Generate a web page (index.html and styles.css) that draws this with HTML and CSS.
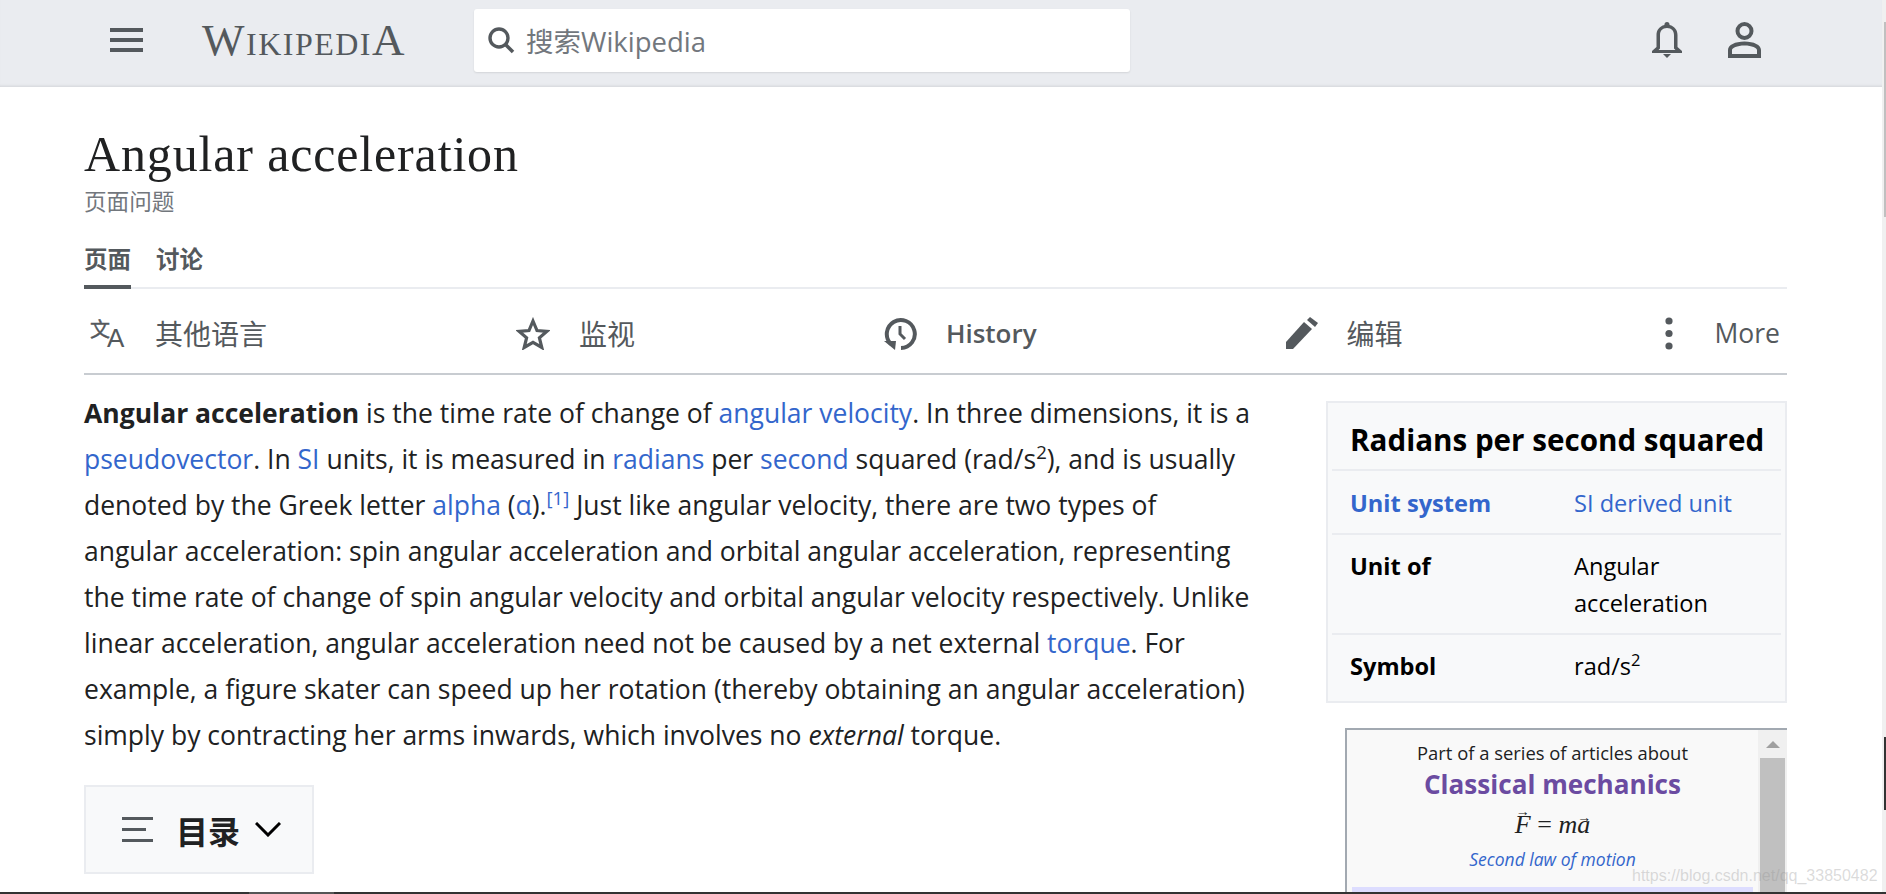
FILE: index.html
```html
<!DOCTYPE html>
<html lang="en">
<head>
  <meta charset="UTF-8" />
  <title>Angular acceleration - Wikipedia</title>
  <link rel="stylesheet" href="styles.css">
</head>
<body>

<div class="pagina">
  <div class="principal">

    <header class="cabecera">
      <svg class="menu" width="33" height="24" viewBox="0 0 33 24"><path d="M0 0h33v4H0zM0 10h33v4H0zM0 20h33v4H0z"/></svg>
      <div class="logo">Wikipedi<span class="logo-a">A</span></div>
      <div class="buscador">
        <svg width="27" height="27" viewBox="0 0 27 27"><circle cx="11" cy="11" r="9" fill="none" stroke="#54595d" stroke-width="3.4"/><path d="M17 17l8 8" stroke="#54595d" stroke-width="3.6" fill="none"/></svg>
        <span>搜索Wikipedia</span>
      </div>
      <div class="cabecera-iconos">
        <svg width="30" height="36" viewBox="0 0 30 36"><path fill-rule="evenodd" d="M15 0c1.6 0 2.6 1.2 2.6 3 5 1.2 7.9 5.2 7.9 10v12l4.500 4v2H0v-2l4.500-4V13c0-4.800 2.900-8.800 7.900-10C12.400 1.200 13.400 0 15 0zM15 6c-4.700 0-7 3.200-7 7v13.500l-1.500 1.500h17L22 26.500V13c0-3.800-2.300-7-7-7z"/><path d="M11 32h8l-4 4z"/></svg>
        <svg width="33" height="36" viewBox="0 0 33 36"><circle cx="16.500" cy="9" r="7" fill="none" stroke="#54595d" stroke-width="4"/><path fill-rule="evenodd" d="M0 36v-8c0-5 7-8.500 16.500-8.500S33 23 33 28v8zM4 32h25v-4c0-2-5-4.500-12.500-4.500S4 26 4 28z"/></svg>
      </div>
    </header>

    <div class="contenido">
      <h1>Angular acceleration</h1>
      <div class="subtitulo">页面问题</div>

      <nav class="pestanas">
        <a class="pestana activa">页面</a>
        <a class="pestana">讨论</a>
      </nav>

      <div class="acciones">
        <div class="accion">
          <svg class="icono-idioma" width="36" height="32" viewBox="0 0 36 32"><text x="0" y="20" class="icono-wen">文</text><text x="17" y="30" class="icono-a">A</text></svg>
          <span class="cjk">其他语言</span>
        </div>
        <div class="accion">
          <svg width="34" height="33" viewBox="0 0 34 33"><path fill="none" stroke="#54595d" stroke-width="3.200" d="M17 4l4 9.500 10 .8-7.600 6.500 2.400 9.700L17 25.300 8.200 30.500l2.400-9.700L3 14.300l10-.8z"/></svg>
          <span class="cjk">监视</span>
        </div>
        <div class="accion">
          <svg width="33" height="33" viewBox="0 0 33 33"><path fill="none" stroke="#54595d" stroke-width="4" d="M7 27A14 14 0 1 1 17 31"/><path d="M0 24h12l-1 9z"/><path fill="none" stroke="#54595d" stroke-width="3" d="M16 9v8l5 5"/></svg>
          <span class="historia">History</span>
        </div>
        <div class="accion">
          <svg width="32" height="32" viewBox="0 0 32 32"><path d="M0 32v-7L18 5l8 7L7 32z"/><path d="M21 3l3-3 8 6-3 4z"/></svg>
          <span class="cjk">编辑</span>
        </div>
        <div class="accion accion-mas">
          <svg width="8" height="33" viewBox="0 0 8 33"><circle cx="4" cy="4" r="3.600"/><circle cx="4" cy="16.500" r="3.600"/><circle cx="4" cy="29" r="3.600"/></svg>
          <span class="mas">More</span>
        </div>
      </div>

      <div class="cuerpo">
        <article class="articulo">
          <p><b>Angular acceleration</b> is the time rate of change of <a>angular velocity</a>. In three dimensions, it is a <a>pseudovector</a>. In <a>SI</a> units, it is measured in <a>radians</a> per <a>second</a> squared (rad/s<sup>2</sup>), and is usually denoted by the Greek letter <a>alpha</a> (<a>α</a>).<sup class="ref"><a>[1]</a></sup> Just like angular velocity, there are two types of angular acceleration: spin angular acceleration and orbital angular acceleration, representing the time rate of change of spin angular velocity and orbital angular velocity respectively. Unlike linear acceleration, angular acceleration need not be caused by a net external <a>torque</a>. For example, a figure skater can speed up her rotation (thereby obtaining an angular acceleration) simply by contracting her arms inwards, which involves no <i>external</i> torque.</p>

          <div class="indice">
            <svg width="31" height="25" viewBox="0 0 31 25"><path d="M0 0h31v3H0zM0 11h24v3H0zM0 22h31v3H0z"/></svg>
            <b>目录</b>
            <svg class="flecha" width="26" height="15" viewBox="0 0 26 15"><path d="M1 1l12 12L25 1" fill="none" stroke="#000" stroke-width="3"/></svg>
          </div>
        </article>

        <aside class="lateral">
          <div class="ficha">
            <table>
              <colgroup><col class="col-etiqueta"><col></colgroup>
              <tr class="fila-titulo"><th colspan="2">Radians per second squared</th></tr>
              <tr class="fila-a"><th><a>Unit system</a></th><td><a>SI derived unit</a></td></tr>
              <tr class="fila-b"><th>Unit of</th><td>Angular acceleration</td></tr>
              <tr class="fila-c"><th>Symbol</th><td>rad/s<sup>2</sup></td></tr>
            </table>
          </div>

          <div class="serie">
            <div class="serie-texto">
              <div class="serie-parte">Part of a series of articles about</div>
              <div class="serie-nombre">Classical mechanics</div>
              <div class="formula"><i class="vector vector-alto">F</i> = <i>m</i><i class="vector">a</i></div>
              <div class="serie-ley"><a>Second law of motion</a></div>
              <div class="serie-franja"></div>
            </div>
            <div class="serie-barra">
              <div class="serie-boton"></div>
              <div class="serie-pulgar"></div>
            </div>
          </div>
        </aside>
      </div>
    </div>
  </div>

  <div class="barra-pagina"></div>
</div>

<div class="barra-inferior"><div class="barra-trozo"></div></div>

<div class="pulgar-gris"></div>
<div class="pulgar-negro"></div>
<div class="marca-agua">https://blog.csdn.net/qq_33850482</div>

</body>
</html>
```

FILE: styles.css
```css
html, body {
  margin: 0;
  height: 894px;
  overflow: hidden;
}

body {
  font-family: 'Open Sans', 'Noto Sans CJK SC', sans-serif;
  color: #202122;
  background: #fff;
  position: relative;
}

a {
  color: #3366cc;
}

svg {
  fill: #54595d;
  display: block;
}

.pagina {
  display: flex;
  height: 892px;
  overflow: hidden;
}

.principal {
  flex: 1;
  min-width: 0;
}

.barra-pagina {
  width: 4px;
  background: #f0f0f0;
}

.barra-inferior {
  height: 2px;
  background: #333;
  padding-left: 249px;
}

.barra-trozo {
  width: 85px;
  height: 2px;
  background: #555;
}

.pulgar-gris {
  position: absolute;
  right: 0;
  top: 22px;
  width: 2px;
  height: 195px;
  background: #c0c0c0;
}

.pulgar-negro {
  position: absolute;
  right: 0;
  top: 737px;
  width: 2px;
  height: 73px;
  background: #333;
}

.marca-agua {
  position: absolute;
  left: 1632px;
  top: 864px;
  font-family: 'Liberation Sans', sans-serif;
  font-size: 16px;
  line-height: 24px;
  white-space: nowrap;
  color: rgba(150, 150, 150, 0.35);
}

/* cabecera */
.cabecera {
  height: 87px;
  box-sizing: border-box;
  background: #eaecf0;
  box-shadow: inset 0 -3px 3px -2px rgba(0, 0, 0, 0.1);
  display: flex;
  align-items: center;
  padding: 0 121px 7px 110px;
}

.logo {
  margin-left: 59px;
  width: 204px;
  font-family: 'Liberation Serif', serif;
  font-variant: small-caps;
  font-size: 45px;
  line-height: 40px;
  letter-spacing: 1.500px;
  color: #54595d;
  white-space: nowrap;
}

.logo-a {
  font-size: 45px;
}

.buscador {
  margin-left: 68px;
  width: 656px;
  height: 63px;
  box-sizing: border-box;
  background: #fff;
  border-radius: 3px;
  box-shadow: 0 1px 2px rgba(0, 0, 0, 0.1);
  display: flex;
  align-items: center;
  gap: 11px;
  padding-left: 14px;
  font-size: 27.500px;
  color: #72777d;
}

.cabecera-iconos {
  margin-left: auto;
  display: flex;
  gap: 46px;
}

/* titulo y pestañas */
.contenido {
  padding: 0 95px 0 84px;
}

h1 {
  margin: 37px 0 0;
  font-family: 'Liberation Serif', serif;
  font-weight: normal;
  font-size: 50px;
  line-height: 60px;
  letter-spacing: 0.850px;
  color: #202122;
}

.subtitulo {
  height: 32px;
  padding-top: 1px;
  font-size: 22.600px;
  line-height: 33px;
  color: #72777d;
}

.pestanas {
  height: 70px;
  border-bottom: 2px solid #eaecf0;
  display: flex;
  align-items: flex-end;
  gap: 25px;
}

.pestana {
  font-size: 23.500px;
  font-weight: bold;
  line-height: 30px;
  color: #54595d;
  padding-bottom: 11px;
  margin-bottom: -2px;
  border-bottom: 4px solid transparent;
}

.pestana.activa {
  border-bottom-color: #54595d;
}

.acciones {
  height: 80px;
  border-bottom: 2px solid #c8ccd1;
  padding: 4px 7px 0 6px;
  display: flex;
  justify-content: space-between;
  align-items: center;
}

.accion {
  display: flex;
  align-items: center;
  gap: 29px;
  font-size: 26px;
  color: #54595d;
}

.accion-mas {
  padding-left: 14px;
}

.accion .cjk {
  font-size: 28px;
}

.accion .historia {
  font-weight: 600;
}

.accion .mas {
  margin-left: 12px;
  font-size: 26.500px;
}

.icono-idioma {
  overflow: visible;
}

.icono-wen {
  font-size: 20px;
  fill: #54595d;
  stroke: #54595d;
  stroke-width: 0.4px;
}

.icono-a {
  font-family: 'Liberation Sans', sans-serif;
  font-size: 26px;
  fill: #54595d;
}

/* cuerpo */
.cuerpo {
  display: flex;
  justify-content: space-between;
}

.articulo {
  width: 1181px;
}

.articulo p {
  margin: 15px 0 0;
  max-width: 1169px;
  font-size: 26.500px;
  line-height: 46px;
}

sup {
  font-size: 70%;
  line-height: 0;
}

.indice {
  margin-top: 27px;
  width: 230px;
  height: 89px;
  box-sizing: border-box;
  background: #f8f9fa;
  border: 2px solid #eaecf0;
  display: flex;
  align-items: center;
  padding-left: 36px;
  font-size: 32px;
}

.indice b {
  margin-left: 23px;
}

.indice .flecha {
  margin-left: 15px;
}

.lateral {
  width: 461px;
  margin-top: 26px;
}

.ficha {
  height: 302px;
  box-sizing: border-box;
  background: #f8f9fa;
  border: 2px solid #eaecf0;
  padding: 0 4px;
  color: #000;
}

.ficha table {
  width: 100%;
  table-layout: fixed;
  border-collapse: collapse;
  font-size: 23.600px;
  line-height: 37px;
}

.col-etiqueta {
  width: 224px;
}

.ficha th, .ficha td {
  text-align: left;
  vertical-align: middle;
  padding: 0 0 0 18px;
}

.ficha tr + tr {
  border-top: 2px solid #eaecf0;
}

.fila-titulo {
  height: 67px;
  font-size: 29.600px;
}

.ficha .fila-titulo th {
  padding-top: 6px;
}

.fila-a {
  height: 64px;
}

.ficha .fila-a th, .ficha .fila-a td {
  padding-top: 3px;
}

.fila-b {
  height: 100px;
}

.ficha .fila-b th, .ficha .fila-b td {
  vertical-align: top;
  padding-top: 13px;
}

.fila-c {
  height: 67px;
}

.ficha .fila-c th, .ficha .fila-c td {
  padding-bottom: 4px;
}

.serie {
  margin-top: 25px;
  margin-left: 19px;
  height: 170px;
  display: flex;
  border-top: 2px solid #a2a9b1;
  border-left: 2px solid #a2a9b1;
  overflow: hidden;
}

.serie-texto {
  flex: 1;
  background: #f9f9f9;
  padding: 10px 5px 0;
  text-align: center;
}

.serie-parte {
  font-size: 18.400px;
  line-height: 26px;
}

.serie-nombre {
  font-size: 26.100px;
  font-weight: bold;
  line-height: 36px;
  color: #6b4ba1;
}

.formula {
  margin-top: 4px;
  font-family: 'Liberation Serif', serif;
  font-size: 26px;
  line-height: 38px;
}

.vector {
  position: relative;
  display: inline-block;
}

.vector::before {
  content: "→";
  position: absolute;
  left: 0;
  right: 0;
  top: 6px;
  font-style: normal;
  font-size: 14px;
  line-height: 12px;
  text-align: center;
}

.vector-alto::before {
  top: 0;
}

.serie-ley {
  margin-top: 1px;
  font-size: 17.500px;
  font-style: italic;
  line-height: 28px;
}

.serie-franja {
  margin-top: 14px;
  height: 20px;
  background: #ddddff;
}

.serie-barra {
  width: 29px;
  box-sizing: border-box;
  background: #f0f0f0;
  padding: 0 2px;
}

.serie-boton {
  height: 28px;
  display: flex;
  align-items: center;
  justify-content: center;
}

.serie-boton::before {
  content: "";
  border-left: 7px solid transparent;
  border-right: 7px solid transparent;
  border-bottom: 7px solid #a0a0a0;
}

.serie-pulgar {
  height: 140px;
  background: #c0c0c0;
}
```
